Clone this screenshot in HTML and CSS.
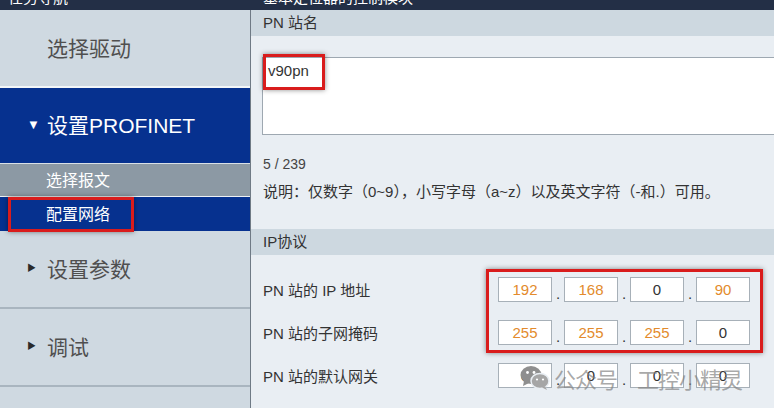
FILE: index.html
```html
<!DOCTYPE html>
<html lang="zh-CN">
<head>
    <meta charset="UTF-8">
    <meta name="viewport" content="width=device-width, initial-scale=1.0">
    <title>设置PROFINET - 配置网络</title>
    <link rel="stylesheet" href="styles.css">
</head>
<body>

    <div class="topbar">
        <span class="topbar-left">任务导航</span>
        <span class="topbar-right">基本定位器的控制模块</span>
    </div>

    <div class="layout">
        <!-- left task navigation -->
        <div class="sidebar">
            <div class="nav-item first"><span class="caret"></span>选择驱动</div>
            <div class="nav-item active"><span class="caret">&#9660;</span>设置PROFINET</div>
            <div class="sub-item">选择报文</div>
            <div class="sub-item current">
                配置网络
                <span class="mark mark-nav"></span>
            </div>
            <div class="nav-item"><span class="caret dark">&#9654;</span>设置参数</div>
            <div class="nav-item"><span class="caret dark">&#9654;</span>调试</div>
        </div>

        <!-- right settings area -->
        <div class="content">
            <div class="section-head">PN 站名</div>
            <div class="section-body">
                <div class="name-box">
                    v90pn
                    <span class="mark mark-name"></span>
                </div>
                <div class="counter">5 / 239</div>
                <div class="hint">说明：仅数字（0~9），小写字母（a~z）以及英文字符（-和.）可用。</div>
            </div>

            <div class="section-head">IP协议</div>
            <div class="ip-body">
                <div class="ip-row">
                    <div class="ip-label">PN 站的 IP 地址</div>
                    <div class="octet">192</div><div class="dot">.</div>
                    <div class="octet">168</div><div class="dot">.</div>
                    <div class="octet plain">0</div><div class="dot">.</div>
                    <div class="octet">90</div>
                </div>
                <div class="ip-row">
                    <div class="ip-label">PN 站的子网掩码</div>
                    <div class="octet">255</div><div class="dot">.</div>
                    <div class="octet">255</div><div class="dot">.</div>
                    <div class="octet">255</div><div class="dot">.</div>
                    <div class="octet plain">0</div>
                </div>
                <div class="ip-row">
                    <div class="ip-label">PN 站的默认网关</div>
                    <div class="octet plain">0</div><div class="dot">.</div>
                    <div class="octet plain">0</div><div class="dot">.</div>
                    <div class="octet plain">0</div><div class="dot">.</div>
                    <div class="octet plain">0</div>
                </div>
                <span class="mark mark-ip"></span>
            </div>

            <div class="watermark">
                <svg width="30" height="26" viewBox="0 0 30 26">
                    <ellipse cx="11" cy="10" rx="10.5" ry="9" fill="#8f8f8f"/>
                    <path d="M4 16 L3 21 L9 18 Z" fill="#8f8f8f"/>
                    <ellipse cx="20" cy="16" rx="9" ry="7.5" fill="#a6a6a6" stroke="#e9eef3" stroke-width="1.5"/>
                    <path d="M25 21 L27 25 L22 22.5 Z" fill="#a6a6a6"/>
                    <circle cx="7.5" cy="7.5" r="1.4" fill="#fff"/>
                    <circle cx="14" cy="7.5" r="1.4" fill="#fff"/>
                    <circle cx="17" cy="14.5" r="1.1" fill="#fff"/>
                    <circle cx="23" cy="14.5" r="1.1" fill="#fff"/>
                </svg>
                <span class="wm-text">公众号</span>
                <span class="wm-text wm-name">工控小精灵</span>
            </div>
        </div>
    </div>

</body>
</html>
```

FILE: styles.css
```css
* {
    margin: 0;
    padding: 0;
    box-sizing: border-box;
}
body {
    font-family: 'Liberation Sans', 'Noto Sans CJK SC', sans-serif;
    background: #e9eef3;
    width: 774px;
    height: 408px;
    overflow: hidden;
    color: #333;
}

/* dark title strip */
.topbar {
    height: 10px;
    background: #232f46;
    display: flex;
    overflow: hidden;
}
.topbar span {
    color: #fff;
    font-size: 15px;
    line-height: 15px;
    margin-top: -10px;
}
.topbar-left {
    width: 251px;
    padding-left: 8px;
}
.topbar-right {
    padding-left: 12px;
}

.layout {
    display: flex;
    height: 398px;
}

/* navigation column */
.sidebar {
    width: 251px;
    background: #cfd9e1;
    border-right: 1px solid #6f7a85;
    position: relative;
}
.nav-item {
    height: 78px;
    display: flex;
    align-items: center;
    padding-left: 27px;
    padding-bottom: 3px;
    font-size: 21px;
    color: #4f4f4f;
    border-bottom: 2px solid #a9b5bf;
}
.nav-item.first {
    border-bottom-color: #f3f6f8;
}
.nav-item.active {
    height: 76px;
    background: #06318f;
    color: #fff;
    border-bottom: 1px solid #d9e0e6;
}
.caret {
    width: 20px;
    font-size: 13px;
    color: #fff;
    flex-shrink: 0;
}
.caret.dark {
    color: #2a2a2a;
    font-size: 9px;
}
.sub-item {
    height: 33px;
    display: flex;
    align-items: center;
    padding-left: 46px;
    padding-bottom: 2px;
    font-size: 16px;
    color: #fff;
    background: #8c99a4;
    border-bottom: 1px solid #eef1f4;
    position: relative;
}
.sub-item.current {
    height: 34px;
    background: #06318f;
    border-bottom: none;
}

/* red highlight frames */
.mark {
    position: absolute;
    border: 3px solid #d91c1c;
    box-shadow: 0 0 5px rgba(0, 0, 0, 0.45);
    pointer-events: none;
}
.mark-nav {
    left: 8px;
    top: 0;
    width: 126px;
    height: 35px;
}
.mark-name {
    left: 0;
    top: -4px;
    width: 62px;
    height: 36px;
}
.mark-ip {
    left: 235px;
    top: 14px;
    width: 277px;
    height: 84px;
}

/* settings area */
.content {
    flex: 1;
    position: relative;
    overflow: hidden;
}
.section-head {
    height: 26px;
    line-height: 26px;
    background: #cdd8e0;
    padding-left: 12px;
    font-size: 15px;
    color: #333;
}
.section-body {
    padding: 21px 0 27px 11px;
}
.name-box {
    position: relative;
    width: 530px;
    height: 78px;
    background: #fff;
    border: 1px solid #9ea8b1;
    padding: 3px 5px;
    font-size: 15px;
    line-height: 20px;
    color: #333;
}
.counter {
    margin-top: 19px;
    padding-left: 1px;
    font-size: 14px;
    line-height: 20px;
    color: #444;
}
.hint {
    margin-top: 8px;
    padding-left: 1px;
    font-size: 15px;
    line-height: 20px;
    color: #333;
}

.ip-body {
    position: relative;
    padding: 22px 0 0 12px;
}
.ip-row {
    display: flex;
    align-items: center;
    height: 25px;
    margin-bottom: 18px;
}
.ip-label {
    width: 235px;
    font-size: 15px;
    color: #333;
}
.octet {
    width: 54px;
    height: 25px;
    background: #fff;
    border: 1px solid #a7b0b8;
    text-align: center;
    font-size: 15px;
    line-height: 23px;
    color: #e38b2c;
}
.octet.plain {
    color: #333;
}
.dot {
    width: 12px;
    align-self: flex-end;
    text-align: center;
    font-size: 15px;
    line-height: 16px;
    color: #333;
}

/* account watermark */
.watermark {
    position: absolute;
    left: 269px;
    top: 352px;
    display: flex;
    align-items: center;
    gap: 4px;
    pointer-events: none;
}
.wm-text {
    font-family: 'Noto Sans CJK SC', sans-serif;
    font-size: 22px;
    color: rgba(130, 130, 130, 0.7);
    letter-spacing: -1px;
}
.wm-name {
    margin-left: 16px;
}
```
